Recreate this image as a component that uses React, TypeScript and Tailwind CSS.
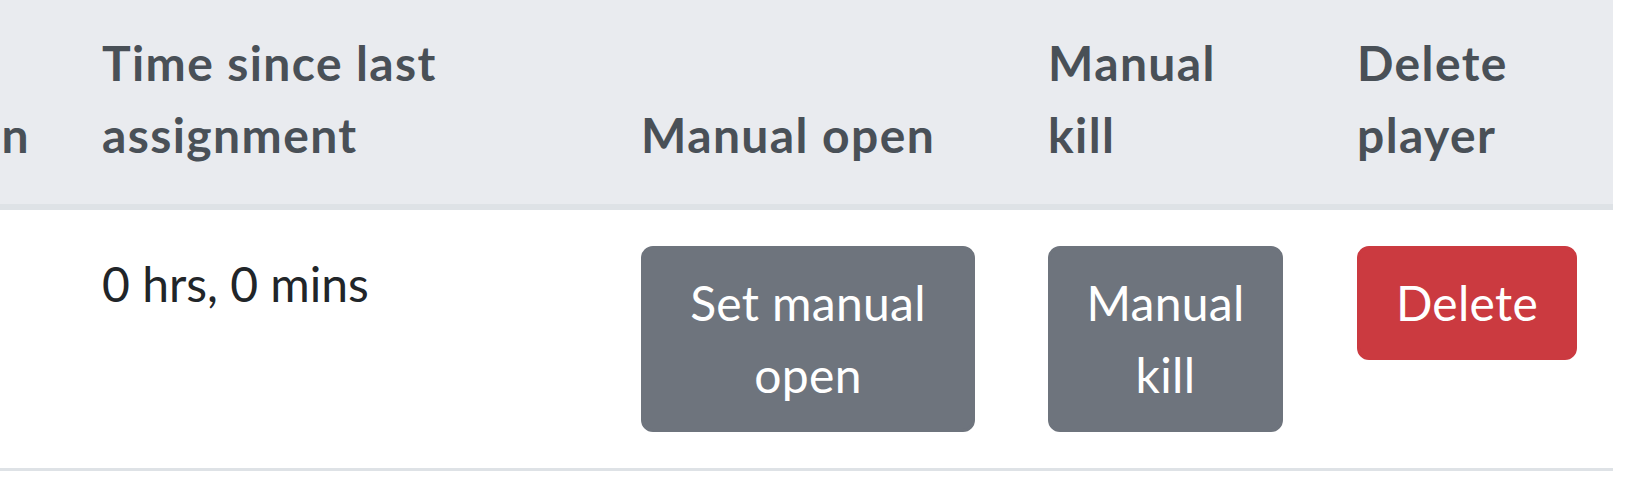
const font = { fontFamily: "Lato, 'Open Sans', 'Noto Sans', sans-serif" };

function ActionButton({ label, tone }: { label: string; tone: "secondary" | "danger" }) {
  const colors =
    tone === "danger"
      ? "bg-[#cb3a40] border-[#cb3a40]"
      : "bg-[#6e747d] border-[#6e747d]";
  return (
    <button
      type="button"
      className={`${colors} w-full rounded-[12px] border-[3px] px-[30px] py-[18px] text-center text-[48px] leading-[72px] font-normal tracking-[0.3px] text-white`}
    >
      {label}
    </button>
  );
}

export default function App() {
  return (
    <div className="h-[497px] w-[1640px] overflow-hidden bg-white text-[#212529]" style={font}>
      <table className="-ml-[234px] border-collapse text-left">
        <thead>
          <tr className="bg-[#e9ebef] text-[48px] leading-[72px] font-bold tracking-[1.4px] text-[#495057]">
            <th className="w-[300px] border-b-[6px] border-[#dee2e6] pl-[36px] pr-[36px] pt-[27px] pb-[33px] text-right align-bottom">
              Location
            </th>
            <th className="w-[539px] border-b-[6px] border-[#dee2e6] px-[36px] pt-[27px] pb-[33px] align-bottom">
              Time since last
              <br />
              assignment
            </th>
            <th className="w-[407px] border-b-[6px] border-[#dee2e6] px-[36px] pt-[27px] pb-[33px] align-bottom">
              Manual open
            </th>
            <th className="w-[309px] border-b-[6px] border-[#dee2e6] px-[36px] pt-[27px] pb-[33px] align-bottom">
              Manual
              <br />
              kill
            </th>
            <th className="w-[291px] border-b-[6px] border-[#dee2e6] px-[36px] pt-[27px] pb-[33px] align-bottom">
              Delete
              <br />
              player
            </th>
          </tr>
        </thead>
        <tbody>
          <tr className="text-[48px] leading-[72px]">
            <td className="border-b-[3px] border-[#dee2e6] p-[36px] align-top"></td>
            <td className="border-b-[3px] border-[#dee2e6] px-[36px] pt-[38px] pb-[34px] align-top">0 hrs, 0 mins</td>
            <td className="border-b-[3px] border-[#dee2e6] p-[36px] align-top">
              <div className="w-[334px]">
                <ActionButton label="Set manual open" tone="secondary" />
              </div>
            </td>
            <td className="border-b-[3px] border-[#dee2e6] p-[36px] align-top">
              <div className="w-[235px]">
                <ActionButton label="Manual kill" tone="secondary" />
              </div>
            </td>
            <td className="border-b-[3px] border-[#dee2e6] p-[36px] align-top">
              <div className="w-[220px]">
                <ActionButton label="Delete" tone="danger" />
              </div>
            </td>
          </tr>
        </tbody>
      </table>
    </div>
  );
}
